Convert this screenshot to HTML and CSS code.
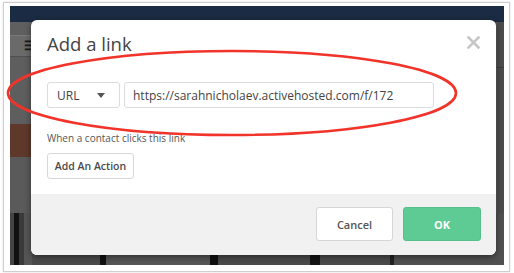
FILE: index.html
```html
<!DOCTYPE html>
<html>
<head>
<meta charset="utf-8">
<link rel="stylesheet" href="styles.css">
</head>
<body>
<div class="frame">
  <div class="screen">
    <div class="navbar"></div>
    <div class="main">
      <div class="left-col">
        <div class="lc-gap1"></div>
        <div class="lc-toolbar"><span class="lc-icon">☰</span></div>
        <div class="lc-gap2"></div>
        <div class="lc-brown"></div>
        <div class="lc-gap3"></div>
      </div>
      <div class="mid-col"></div>
      <div class="right-col"><div class="rc-top"></div></div>
    </div>
    <div class="photos"></div>

    <div class="modal">
      <div class="modal-body">
        <div class="modal-head">
          <h1 class="title">Add a link</h1>
          <svg class="close" width="13" height="13" viewBox="0 0 13 13">
            <path d="M1.5 1.5 L11.5 11.5 M11.5 1.5 L1.5 11.5" stroke="#c6c6c6" stroke-width="2.6" stroke-linecap="square"/>
          </svg>
        </div>
        <div class="link-row">
          <div class="select">URL <span class="caret"></span></div>
          <div class="input">https://sarahnicholaev.activehosted.com/f/172</div>
        </div>
        <p class="hint">When a contact clicks this link</p>
        <button class="btn btn-action">Add An Action</button>
      </div>
      <div class="modal-foot">
        <button class="btn btn-cancel">Cancel</button>
        <button class="btn btn-ok">OK</button>
      </div>
    </div>
  </div>
</div>
<svg class="annot" width="514" height="273" viewBox="0 0 514 273">
  <ellipse cx="232" cy="93" rx="224" ry="42" fill="none" stroke="#f1332a" stroke-width="2.6"/>
</svg>
</body>
</html>
```
FILE: styles.css
```css
* { box-sizing: border-box; }
html, body { margin: 0; padding: 0; background: #fff; }
body { width: 514px; height: 273px; overflow: hidden; position: relative;
  font-family: "Open Sans", "Noto Sans", sans-serif; }

.frame {
  margin: 2px 4px 1px 3px;
  width: 507px; height: 270px;
  border: 1px solid #cfcfcf;
  padding: 3px 5px 6px 6px;
  box-shadow: 0 0 2px rgba(0,0,0,0.15);
}
.screen {
  position: relative;
  width: 494px; height: 259px;
  display: flex; flex-direction: column;
  background: #5a5a5a;
  overflow: hidden;
}
.navbar { height: 16px; background: #1b2b43; flex: none; }
.main { flex: 1; display: flex; }
.left-col { width: 21px; display: flex; flex-direction: column; }
.lc-gap1 { height: 13px; background: #5f5f5f; }
.lc-toolbar { height: 22px; background: #6a6a6a; border-top: 1px solid #7a7a7a; border-bottom: 1px solid #505050;
  display: flex; align-items: center; justify-content: flex-end; }
.lc-icon { color: #1a1a1a; font-size: 12px; line-height: 1; margin-right: -4px; font-weight: bold; }
.lc-gap2 { height: 67px; background: #5e5e5e; }
.lc-brown { height: 33px; background: #5e392b; }
.lc-gap3 { flex: 1; background: #5a5a5a; }
.mid-col { flex: 1; background: #5a5a5a; }
.right-col { width: 7px; background: #4c4c4c; }
.rc-top { height: 46px; border-bottom: 1px solid #3c3c3c; }
.photos {
  height: 52px; flex: none;
  background: linear-gradient(90deg, #444 0, #444 4px, #111 4px, #111 9px, #3a3a3a 9px, #3a3a3a 14px, #555 14px, #555 22px,
    #4a4a4a 22px, #4a4a4a 90px, #111 90px, #111 96px, #555 96px, #555 200px, #111 200px, #111 208px, #4a4a4a 208px, #4a4a4a 300px,
    #151515 300px, #151515 310px, #4a4a4a 310px, #4a4a4a 380px, #222 380px, #222 384px, #505050 384px);
}

.modal {
  position: absolute;
  left: 21px; top: 14px;
  width: 465px; height: 235px;
  background: #fff;
  border-radius: 6px;
  box-shadow: 0 2px 6px rgba(0,0,0,0.45);
  display: flex; flex-direction: column;
  overflow: hidden;
}
.modal-body { flex: 1; padding: 12px 16px 0 16px; display: flex; flex-direction: column; align-items: flex-start; }
.modal-head { width: 100%; display: flex; justify-content: space-between; align-items: flex-start; }
.title { margin: 0; font-size: 18.5px; font-weight: 500; color: #444; line-height: 24px; }
.close { display: block; margin-top: 4px; margin-right: 0; }

.link-row { display: flex; gap: 4px; margin-top: 26px; }
.select, .input {
  height: 26px; border: 1px solid #dcdcdc; border-radius: 3px;
  font-size: 12px; color: #444; display: flex; align-items: center;
}
.select { width: 73px; padding-left: 9px; }
.caret { width: 0; height: 0; border-left: 4px solid transparent; border-right: 4px solid transparent;
  border-top: 5px solid #555; margin-left: 18px; }
.input { width: 310px; padding-left: 8px; }

.hint { margin: 23px 0 0 0; font-size: 10px; color: #555; line-height: 14px; }
.btn { font-family: inherit; border-radius: 3px; cursor: pointer; }
.btn-action { margin-top: 8px; height: 26px; width: 87px; padding: 0; background: #fff;
  border: 1px solid #d8d8d8; font-size: 10.5px; font-weight: 600; color: #4a4a4a; }

.modal-foot { height: 61px; flex: none; background: #f1f1f1; display: flex; justify-content: flex-end;
  align-items: flex-start; gap: 10px; padding: 13px 15px 0 0; }
.btn-cancel, .btn-ok { height: 34px; width: 77px; padding: 0; font-size: 11px; font-weight: 600; }
.btn-cancel { background: #fff; border: 1px solid #d6d6d6; color: #555; }
.btn-ok { width: 78px; background: #5ecb94; border: 1px solid #56c08b; color: #fff; font-weight: 700; }

.annot { position: absolute; left: 0; top: 0; pointer-events: none; }
```
